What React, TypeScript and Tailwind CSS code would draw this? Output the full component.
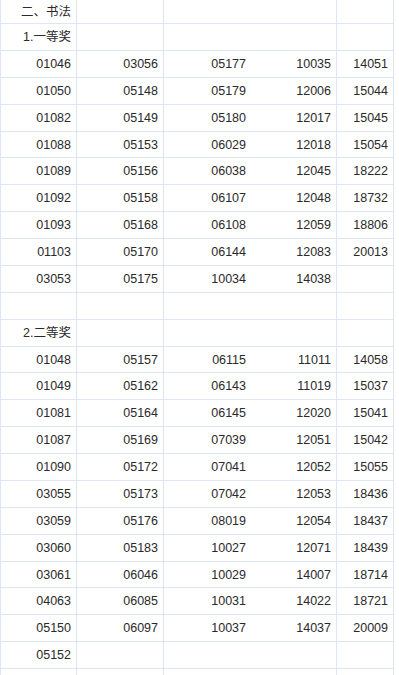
const firstPrize = [
  ["01046", "03056", "05177", "10035", "14051"],
  ["01050", "05148", "05179", "12006", "15044"],
  ["01082", "05149", "05180", "12017", "15045"],
  ["01088", "05153", "06029", "12018", "15054"],
  ["01089", "05156", "06038", "12045", "18222"],
  ["01092", "05158", "06107", "12048", "18732"],
  ["01093", "05168", "06108", "12059", "18806"],
  ["01103", "05170", "06144", "12083", "20013"],
  ["03053", "05175", "10034", "14038", ""],
];

const secondPrize = [
  ["01048", "05157", "06115", "11011", "14058"],
  ["01049", "05162", "06143", "11019", "15037"],
  ["01081", "05164", "06145", "12020", "15041"],
  ["01087", "05169", "07039", "12051", "15042"],
  ["01090", "05172", "07041", "12052", "15055"],
  ["03055", "05173", "07042", "12053", "18436"],
  ["03059", "05176", "08019", "12054", "18437"],
  ["03060", "05183", "10027", "12071", "18439"],
  ["03061", "06046", "10029", "14007", "18714"],
  ["04063", "06085", "10031", "14022", "18721"],
  ["05150", "06097", "10037", "14037", "20009"],
  ["05152", "", "", "", ""],
];

const colClasses = [
  "w-[76px] border-r border-[#dce7f3]",
  "w-[87px] border-r border-[#dce7f3]",
  "w-[87px]",
  "w-[86px] border-r border-[#dce7f3]",
  "w-[57px] border-r border-[#dce7f3]",
];

const Row = ({ cells, first }: { cells: string[]; first?: boolean }) => {
  return (
    <div
      className={`flex border-b border-[#dce7f3] ${
        first ? "h-[24px]" : "h-[26.875px]"
      }`}
    >
      {colClasses.map((cls, i) => (
        <div
          key={i}
          className={`${cls} flex items-center justify-end pr-[5px] pt-[1px] whitespace-nowrap`}
        >
          {cells[i] || ""}
        </div>
      ))}
    </div>
  );
};

export default function App() {
  return (
    <main
      className="w-[399px] h-[675px] overflow-hidden bg-white text-[#2a2a2a] text-[12.5px]"
      style={{ fontFamily: '"Liberation Sans", "Noto Sans CJK SC", sans-serif' }}
    >
      <section className="w-[394px] border-l border-[#dce7f3]">
        <Row cells={["二、书法"]} first />
        <Row cells={["1.一等奖"]} />
        {firstPrize.map((r, i) => (
          <Row key={"a" + i} cells={r} />
        ))}
        <Row cells={[]} />
        <Row cells={["2.二等奖"]} />
        {secondPrize.map((r, i) => (
          <Row key={"b" + i} cells={r} />
        ))}
        <Row cells={[]} />
      </section>
    </main>
  );
}
